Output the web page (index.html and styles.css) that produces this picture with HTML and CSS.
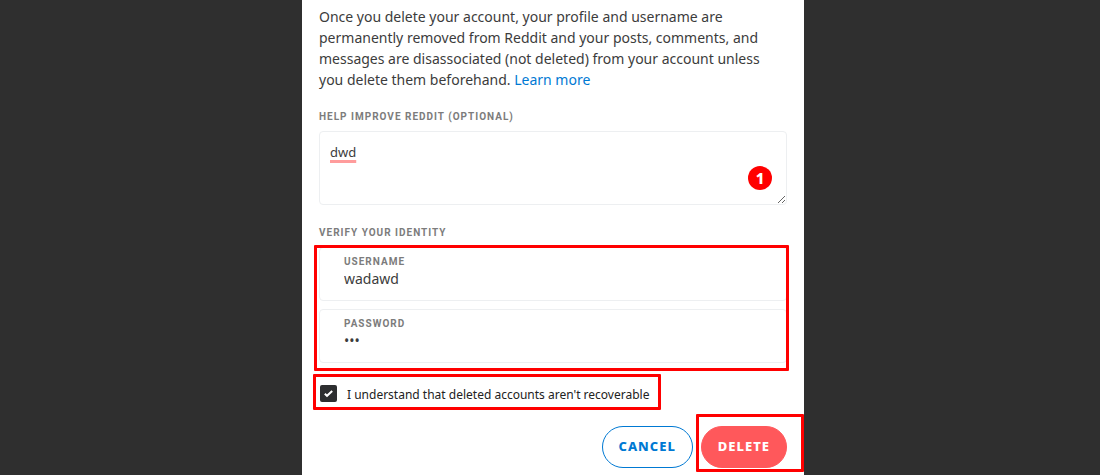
FILE: index.html
```
<!doctype html>
<html lang="en">

<head>
  <meta charset="UTF-8" />
  <meta name="viewport" content="width=device-width, initial-scale=1.0" />
  <title>Delete account</title>
  <link rel="stylesheet" href="styles.css">
</head>

<body>
  <form class="modal">
    <p class="intro">Once you delete your account, your profile and username are permanently removed from Reddit and your posts, comments, and messages are disassociated (not deleted) from your account unless you delete them beforehand. <a href="#">Learn more</a></p>

    <label class="caption" for="reason">HELP IMPROVE REDDIT (OPTIONAL)</label>
    <div class="reason">
      <textarea id="reason" spellcheck="false">dwd</textarea>
      <span class="step">1</span>
    </div>

    <h2 class="caption">VERIFY YOUR IDENTITY</h2>
    <div class="fields marked">
      <div class="field">
        <label class="caption" for="username">USERNAME</label>
        <input id="username" type="text" value="wadawd">
      </div>
      <div class="field">
        <label class="caption" for="password">PASSWORD</label>
        <input id="password" type="password" value="dwd">
      </div>
    </div>

    <div class="confirm marked">
      <input id="understand" type="checkbox" checked>
      <svg class="tick" viewBox="0 0 17 17" aria-hidden="true">
        <path d="M4.8 8.8 L7 10.8 L12.2 6" />
      </svg>
      <label for="understand">I understand that deleted accounts aren't recoverable</label>
    </div>

    <div class="actions">
      <button class="btn cancel" type="button">CANCEL</button>
      <div class="submit marked">
        <button class="btn delete" type="submit">DELETE</button>
      </div>
    </div>
  </form>
</body>

</html>
```
FILE: styles.css
```
:root {
  --blue: #0079d3;
  --coral: #ff585b;
  --mark: #ff0000;
  --line: #edeff1;
  --text: #3c3c3c;
  --muted: #7c7c7c;
}

* {
  margin: 0;
  padding: 0;
  box-sizing: border-box;
}

body {
  background: #2f2f2f;
  color: var(--text);
  font: 14px/21px "Noto Sans", sans-serif;
  min-height: 100vh;
  padding-left: 6px;
  display: flex;
  justify-content: center;
}

.modal {
  width: 100%;
  max-width: 502px;
  background: #fff;
  padding: 6px 17px 7px;
}

.intro a {
  color: var(--blue);
  text-decoration: none;
}

.caption {
  display: block;
  color: var(--muted);
  font: 700 10px/18px "Roboto", sans-serif;
  letter-spacing: 1px;
}

.intro + .caption {
  margin: 18px 0 5px;
}

/* Feedback box */
.reason {
  position: relative;
  display: flex;
}

.reason textarea {
  width: 100%;
  height: 74px;
  padding: 10px;
  border: 1px solid var(--line);
  border-radius: 4px;
  color: var(--text);
  font: 13px/21px "Noto Sans", sans-serif;
  outline: none;
  resize: vertical;
  text-decoration: underline 3px #ff9c9c;
  text-decoration-skip-ink: none;
  text-underline-offset: 3px;
}

.step {
  position: absolute;
  top: 35px;
  right: 15px;
  width: 24px;
  height: 24px;
  border-radius: 50%;
  background: var(--mark);
  color: #fff;
  font-size: 15px;
  font-weight: 800;
  line-height: 24px;
  text-align: center;
}

.reason + .caption {
  margin: 19px 0 5px;
}

/* Red frames drawn over the steps */
.marked {
  position: relative;
}

.marked::after {
  content: "";
  position: absolute;
  border: 3px solid var(--mark);
  border-radius: 1px;
  pointer-events: none;
}

.fields {
  display: grid;
  gap: 8px;
}

.fields::after {
  inset: -2px -2px -8px -5px;
}

.field {
  height: 54px;
  padding: 5px 24px;
  border: 1px solid var(--line);
  border-radius: 4px;
}

.field input {
  display: block;
  width: 100%;
  height: 16px;
  border: 0;
  outline: none;
  background: none;
  color: var(--text);
  font: 14px/16px "Noto Sans", sans-serif;
}

/* Confirmation */
.confirm {
  display: flex;
  align-items: center;
  gap: 10px;
  width: fit-content;
  margin-top: 20px;
  padding-left: 1px;
}

.confirm::after {
  inset: -9px -12px -6px -6px;
}

.confirm input {
  appearance: none;
  width: 17px;
  height: 17px;
  border-radius: 2px;
  background: #2d2e30;
}

.tick {
  position: absolute;
  left: 1px;
  width: 17px;
  height: 17px;
  fill: none;
  stroke: #fff;
  stroke-width: 2;
  pointer-events: none;
}

.confirm label {
  padding-top: 3px;
  color: #222;
  font: 400 12px/18px "Noto Sans", sans-serif;
}

/* Buttons */
.actions {
  display: flex;
  justify-content: flex-end;
  gap: 8px;
  margin-top: 22px;
}

.submit::after {
  inset: -12px -17px -4px -5px;
}

.btn {
  height: 42px;
  padding: 0 16px 2px;
  border: 1px solid var(--blue);
  border-radius: 21px;
  background: #fff;
  color: var(--blue);
  font: 800 13px/20px "Noto Sans", sans-serif;
  letter-spacing: 1px;
}

.delete {
  border-color: var(--coral);
  background: var(--coral);
  color: #fff;
}
```
